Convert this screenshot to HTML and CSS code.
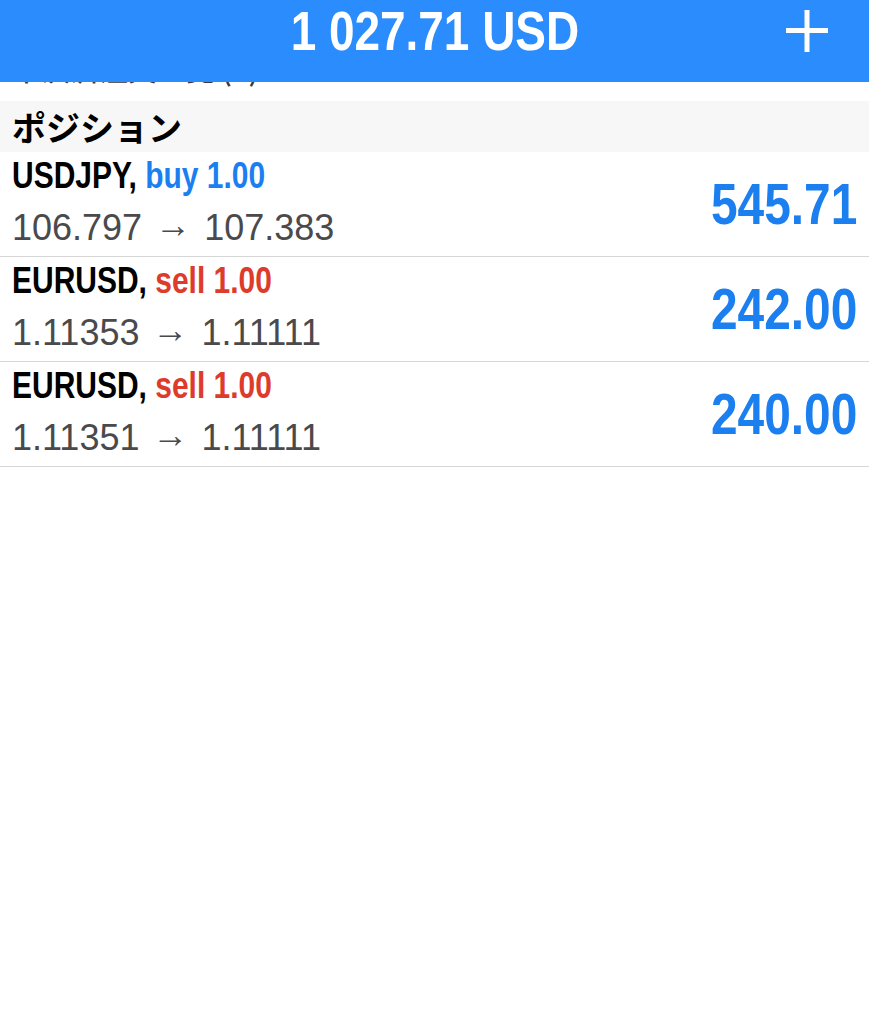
FILE: index.html
```html
<!DOCTYPE html>
<html lang="ja">
<head>
    <meta charset="UTF-8">
    <title>ポジション</title>
    <link rel="stylesheet" href="styles.css">
</head>
<body>
    <div class="header">
        <span></span>
        <div class="balance">1 027.71 USD</div>
        <div class="add">
            <svg width="44" height="44" viewBox="0 0 44 44">
                <rect x="19.5" y="1" width="5" height="42" fill="#fff"/>
                <rect x="1" y="19" width="42" height="5" fill="#fff"/>
            </svg>
        </div>
    </div>
    <div class="peek">
        <div class="peekText">未決済注文一覧 (0)</div>
    </div>
    <div class="section">ポジション</div>
    <ul class="list">
        <li class="row">
            <div class="info">
                <div class="title">USDJPY, <span class="buy">buy 1.00</span></div>
                <div class="price">106.797 <span class="arrow">→</span> 107.383</div>
            </div>
            <div class="profit">545.71</div>
        </li>
        <li class="row">
            <div class="info">
                <div class="title">EURUSD, <span class="sell">sell 1.00</span></div>
                <div class="price">1.11353 <span class="arrow">→</span> 1.11111</div>
            </div>
            <div class="profit">242.00</div>
        </li>
        <li class="row">
            <div class="info">
                <div class="title">EURUSD, <span class="sell">sell 1.00</span></div>
                <div class="price">1.11351 <span class="arrow">→</span> 1.11111</div>
            </div>
            <div class="profit">240.00</div>
        </li>
    </ul>
</body>
</html>
```

FILE: styles.css
```css
*{
    margin: 0;
    padding: 0;
    box-sizing: border-box;
}
body{
    background: #fff;
    font-family: "Liberation Sans", "Noto Sans CJK JP", sans-serif;
}
.header{
    height: 82px;
    background: #2a8cfd;
    display: grid;
    grid-template-columns: 1fr auto 1fr;
    align-items: center;
    color: #fff;
}
/* 字体没有窄体，用缩放代替 */
.balance{
    font-weight: bold;
    font-size: 56px;
    line-height: 1;
    margin-top: -20px;
    transform: scaleX(0.82);
}
.add{
    justify-self: end;
    padding-right: 40px;
    margin-top: -20px;
    display: flex;
}
.peek{
    height: 19px;
    overflow: hidden;
}
.peekText{
    margin-top: -31px;
    padding-left: 12px;
    font-family: "Noto Sans CJK JP", sans-serif;
    font-weight: 500;
    font-size: 29px;
    line-height: 34px;
    color: #3a3a3a;
}
.section{
    height: 51px;
    background: #f7f7f7;
    padding-left: 12px;
    display: flex;
    align-items: center;
    font-family: "Noto Sans CJK JP", sans-serif;
    font-weight: bold;
    font-size: 34px;
    color: #000;
}
.list{
    list-style: none;
}
.row{
    height: 105px;
    border-bottom: 1px solid #d6d6d6;
    padding: 0 12px;
    display: flex;
    justify-content: space-between;
    align-items: center;
}
.info{
    display: flex;
    flex-direction: column;
    gap: 12px;
    margin-top: -5px;
}
.title{
    font-weight: bold;
    font-size: 37px;
    line-height: 40px;
    color: #000;
    white-space: nowrap;
    transform: scaleX(0.81);
    transform-origin: left center;
}
.buy{
    color: #1c7ff0;
}
.sell{
    color: #dd3b2b;
}
.price{
    font-size: 36px;
    line-height: 40px;
    color: #4a4a4c;
    white-space: nowrap;
}
.arrow{
    display: inline-block;
    margin: 0 3px;
    transform: translateY(-3px);
}
.profit{
    font-weight: bold;
    font-size: 57px;
    color: #1c7ff0;
    transform: scaleX(0.84);
    transform-origin: right center;
}
```
